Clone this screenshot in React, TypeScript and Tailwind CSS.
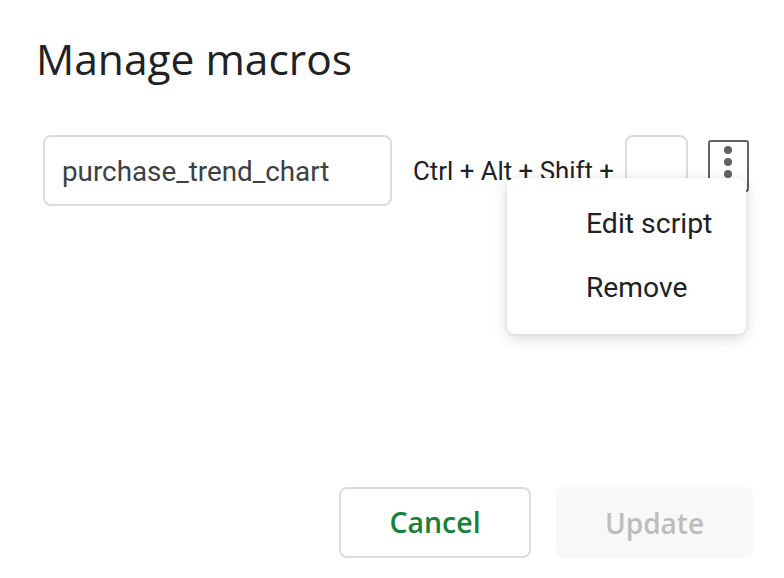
import React from "react";

export default function App() {
  return (
    <div className="relative w-[784px] h-[578px] bg-white flex flex-col overflow-hidden">
      <h1
        className="pl-[36px] pt-[31px] text-[42.5px] leading-[56px] text-[#202124]"
        style={{ fontFamily: '"Open Sans", sans-serif' }}
      >
        Manage macros
      </h1>

      <div
        className="mt-[48px] flex items-center pl-[43px]"
        style={{ fontFamily: 'Roboto, sans-serif' }}
      >
        <div className="w-[349px] h-[71px] border-2 border-[#dadce0] rounded-[8px] flex items-center pl-[17px] pt-[2px] text-[27.8px] text-[#3c4043]">
          purchase_trend_chart
        </div>
        <div className="ml-[21px] pt-[2px] text-[25.8px] text-[#202124] whitespace-nowrap">
          Ctrl + Alt + Shift +
        </div>
        <div className="ml-[11px] w-[63px] h-[71px] border-2 border-[#dadce0] rounded-[8px]" />
        <div className="ml-[20px] self-start mt-[5px] w-[41px] h-[52px] border-2 border-[#5f6368] rounded-[3px] flex flex-col items-center justify-start pt-[4px] gap-[4px]">
          <span className="block w-[8px] h-[8px] rounded-full bg-[#5f6368]" />
          <span className="block w-[8px] h-[8px] rounded-full bg-[#5f6368]" />
          <span className="block w-[8px] h-[8px] rounded-full bg-[#5f6368]" />
        </div>
      </div>

      <div className="flex-1" />

      <div
        className="flex justify-end gap-[25px] pr-[31px] pb-[20px]"
        style={{ fontFamily: '"Open Sans", sans-serif' }}
      >
        <button className="w-[192px] h-[71px] border-2 border-[#dadce0] rounded-[8px] bg-white text-[28.5px] font-semibold text-[#188038]">
          Cancel
        </button>
        <button className="w-[197px] h-[71px] rounded-[8px] bg-[#f8f8f8] text-[28px] font-semibold text-[#bdbdbd]">
          Update
        </button>
      </div>

      <div
        className="absolute left-[507px] top-[178px] w-[239px] h-[156px] bg-white rounded-[8px] py-[14px] shadow-[0_4px_16px_rgba(0,0,0,0.14),0_1px_4px_rgba(0,0,0,0.08)]"
        style={{ fontFamily: 'Roboto, sans-serif' }}
      >
        <div className="h-[64px] flex items-center pl-[79px] text-[28.4px] text-[#202124]">
          Edit script
        </div>
        <div className="h-[64px] flex items-center pl-[79px] text-[28.2px] text-[#202124]">
          Remove
        </div>
      </div>
    </div>
  );
}
